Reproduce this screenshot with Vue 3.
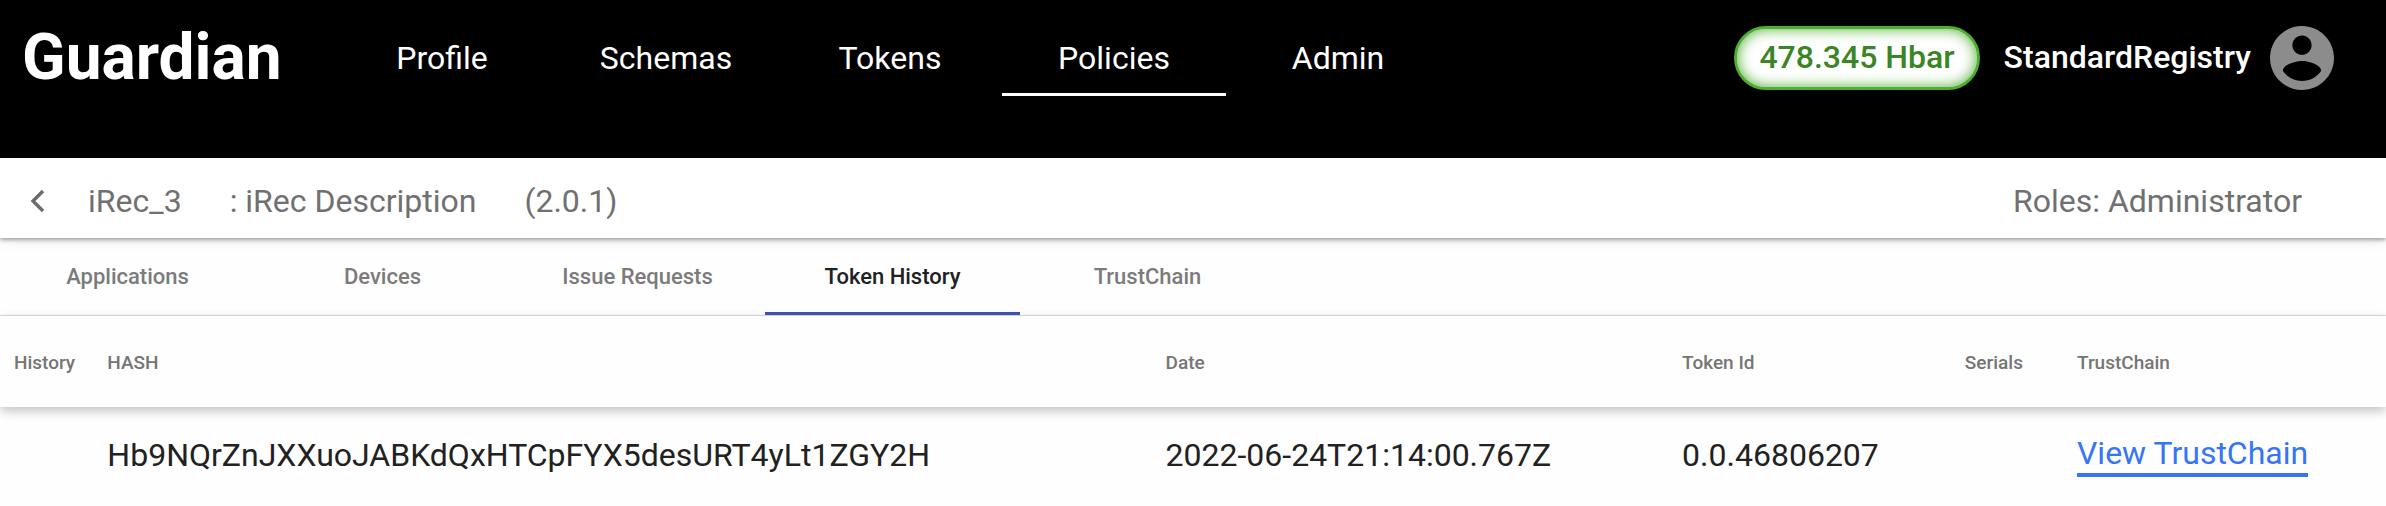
<script setup>
import { ref } from 'vue'

const navItems = ['Profile', 'Schemas', 'Tokens', 'Policies', 'Admin']
const activeNav = ref('Policies')

const tabs = ['Applications', 'Devices', 'Issue Requests', 'Token History', 'TrustChain']
const activeTab = ref('Token History')

const rows = [
  {
    hash: 'Hb9NQrZnJXXuoJABKdQxHTCpFYX5desURT4yLt1ZGY2H',
    date: '2022-06-24T21:14:00.767Z',
    tokenId: '0.0.46806207',
  },
]
</script>

<template>
  <div class="page">
    <header class="topbar">
      <a href="#" class="brand">Guardian</a>
      <nav class="nav">
        <a
          v-for="item in navItems"
          :key="item"
          href="#"
          class="nav-item"
          :class="{ active: item === activeNav }"
          @click.prevent="activeNav = item"
        >{{ item }}</a>
      </nav>
      <div class="account">
        <span class="balance">478.345 Hbar</span>
        <span class="user">StandardRegistry</span>
        <button class="avatar" type="button" aria-label="Account">
          <svg viewBox="2 2 20 20" aria-hidden="true">
            <path
              fill="#8c8c8c"
              d="M12 2C6.48 2 2 6.48 2 12s4.48 10 10 10 10-4.48 10-10S17.52 2 12 2zm0 3c1.66 0 3 1.34 3 3s-1.34 3-3 3-3-1.34-3-3 1.34-3 3-3zm0 14.2c-2.5 0-4.71-1.28-6-3.22.03-1.99 4-3.08 6-3.08 1.99 0 5.97 1.09 6 3.08-1.29 1.94-3.5 3.22-6 3.22z"
            />
          </svg>
        </button>
      </div>
    </header>

    <section class="policy">
      <button class="back" type="button" aria-label="Back">
        <svg viewBox="0 0 16 24" aria-hidden="true">
          <path d="M14 2 4 12l10 10" fill="none" stroke="#6b6b6b" stroke-width="3.4" />
        </svg>
      </button>
      <span>iRec_3</span>
      <span>: iRec Description</span>
      <span>(2.0.1)</span>
      <span class="roles">Roles: Administrator</span>
    </section>

    <div class="tabs" role="tablist">
      <button
        v-for="tab in tabs"
        :key="tab"
        type="button"
        role="tab"
        class="tab"
        :class="{ active: tab === activeTab }"
        :aria-selected="tab === activeTab"
        @click="activeTab = tab"
      >{{ tab }}</button>
    </div>

    <table class="history">
      <colgroup>
        <col class="c-history" />
        <col class="c-hash" />
        <col class="c-date" />
        <col class="c-token" />
        <col class="c-serials" />
        <col />
      </colgroup>
      <thead>
        <tr>
          <th scope="col">History</th>
          <th scope="col">HASH</th>
          <th scope="col">Date</th>
          <th scope="col">Token Id</th>
          <th scope="col">Serials</th>
          <th scope="col">TrustChain</th>
        </tr>
      </thead>
      <tbody>
        <tr v-for="row in rows" :key="row.hash">
          <td></td>
          <td>{{ row.hash }}</td>
          <td>{{ row.date }}</td>
          <td>{{ row.tokenId }}</td>
          <td></td>
          <td><a href="#" class="chain-link">View TrustChain</a></td>
        </tr>
      </tbody>
    </table>
  </div>
</template>

<style>
body {
  margin: 0;
  background: #fefefe;
}
</style>

<style scoped>
.page {
  font-family: Roboto, "Liberation Sans", sans-serif;
  font-size: 32px;
  line-height: 40px;
  color: #212121;
}

button {
  padding: 0;
  border: 0;
  background: none;
  font: inherit;
  color: inherit;
  cursor: pointer;
}

.topbar {
  display: flex;
  align-items: flex-start;
  box-sizing: border-box;
  height: 158px;
  padding: 0 52px 0 22px;
  background: #000;
  color: #fff;
}

.brand {
  width: 308px;
  padding-top: 20px;
  font-size: 64px;
  line-height: 76px;
  font-weight: 700;
  color: #fff;
  text-decoration: none;
}

.nav {
  display: flex;
}

.nav-item {
  box-sizing: border-box;
  width: 224px;
  height: 96px;
  padding-top: 38px;
  border-bottom: 3px solid transparent;
  text-align: center;
  color: #fff;
  text-decoration: none;
}

.nav-item.active {
  border-bottom-color: #fff;
}

.account {
  display: flex;
  align-items: center;
  margin-left: auto;
  padding-top: 26px;
  font-weight: 500;
}

.balance {
  box-sizing: border-box;
  height: 64px;
  padding: 8px 22px;
  border: 3px solid #4faf32;
  border-radius: 32px;
  background: #fff;
  box-shadow: inset 0 0 14px #4faf32;
  color: #3a8524;
}

.user {
  margin: 0 19px 2px 24px;
}

.avatar,
.avatar svg {
  display: block;
  width: 64px;
  height: 64px;
}

.policy {
  position: relative;
  display: flex;
  align-items: center;
  box-sizing: border-box;
  height: 80px;
  padding: 6px 84px 0 28px;
  background: #fff;
  box-shadow: 0 2px 4px rgba(0, 0, 0, 0.35), 0 4px 12px rgba(0, 0, 0, 0.06);
  color: #707070;
  gap: 48px;
}

.back {
  margin-right: -6px;
}

.back svg {
  display: block;
  width: 18px;
  height: 24px;
}

.roles {
  margin-left: auto;
}

.tabs {
  display: flex;
  box-sizing: border-box;
  height: 78px;
  border-bottom: 1px solid #dcdcdc;
}

.tab {
  box-sizing: border-box;
  width: 255px;
  padding-top: 3px;
  border-bottom: 3px solid transparent;
  font-size: 22px;
  font-weight: 500;
  color: #7b7b7b;
}

.tab.active {
  border-bottom-color: #3f51b5;
  color: #212121;
}

.history {
  width: 100%;
  table-layout: fixed;
  border-collapse: collapse;
  white-space: nowrap;
}

.c-history { width: 4.5%; }
.c-hash { width: 44.35%; }
.c-date { width: 21.65%; }
.c-token { width: 11.85%; }
.c-serials { width: 4.7%; }

thead {
  box-shadow: 0 4px 10px rgba(0, 0, 0, 0.24);
}

th {
  height: 89px;
  padding: 2px 0 0;
  text-align: left;
  font-size: 19px;
  line-height: 24px;
  font-weight: 500;
  color: #757575;
}

th:first-child {
  padding-left: 14px;
}

td {
  height: 96px;
  padding: 0;
}

.chain-link {
  display: inline-block;
  border-bottom: 4px solid #3575f6;
  color: #3575f6;
  text-decoration: none;
}
</style>
